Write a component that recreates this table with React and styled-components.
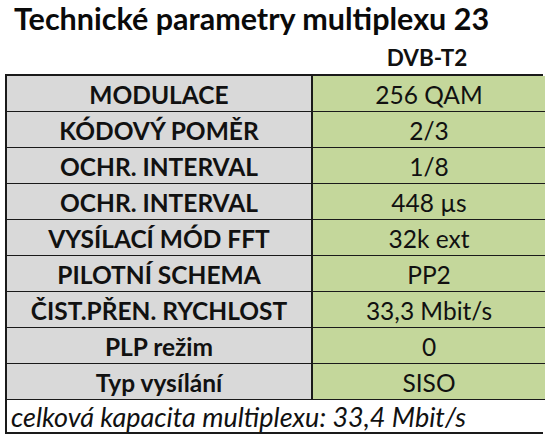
import React from 'react';
import styled, { createGlobalStyle } from 'styled-components';

const GlobalStyle = createGlobalStyle`
	html, body {
		margin: 0;
		padding: 0;
		background: #ffffff;
	}
	body {
		font-family: 'Lato', 'Open Sans', sans-serif;
		color: #111;
	}
`;

const rows = [
	['MODULACE', '256 QAM'],
	['KÓDOVÝ POMĚR', '2/3'],
	['OCHR. INTERVAL', '1/8'],
	['OCHR. INTERVAL', '448 µs'],
	['VYSÍLACÍ MÓD FFT', '32k ext'],
	['PILOTNÍ SCHEMA', 'PP2'],
	['ČIST.PŘEN. RYCHLOST', '33,3 Mbit/s'],
	['PLP režim', '0'],
	['Typ vysílání', 'SISO'],
];

const Page = styled.div`
	width: 550px;
	height: 437px;
	box-sizing: border-box;
	padding: 0 7px 0 5px;
`;

const Title = styled.h1`
	margin: 0;
	padding: 0 0 0 9px;
	height: 40px;
	line-height: normal;
	font-size: 30.5px;
	font-weight: 700;
	color: #0a0a0a;
`;

const ColumnHead = styled.div`
	display: grid;
	grid-template-columns: 306px 232px;
	height: 34px;
	align-items: center;

	& span {
		grid-column: 2;
		text-align: center;
		font-size: 22.5px;
		font-weight: 700;
	}
`;

const Table = styled.div`
	display: grid;
	grid-template-columns: 306px 232px;
	border: 2px solid #1a1a1a;
	box-sizing: border-box;
	width: 538px;
`;

const Cell = styled.div`
	height: 36px;
	box-sizing: border-box;
	display: flex;
	align-items: center;
	justify-content: center;
	padding-top: 1px;
	font-size: 24.5px;
	font-weight: ${(p) => (p.$label ? 700 : 400)};
	background: ${(p) => (p.$label ? '#d9d9d9' : '#c4d79b')};
	border-bottom: 1px solid #1a1a1a;
	border-right: ${(p) => (p.$label ? '2px solid #1a1a1a' : 'none')};
`;

const Footer = styled.div`
	grid-column: 1 / 3;
	height: 32px;
	display: flex;
	align-items: center;
	padding-left: 4px;
	font-size: 27px;
	font-style: italic;
	background: #fff;
`;

export default function App() {
	return (
		<Page>
			<GlobalStyle />
			<Title>Technické parametry multiplexu 23</Title>
			<ColumnHead>
				<span>DVB-T2</span>
			</ColumnHead>
			<Table>
				{rows.map(([label, value], i) => (
					<React.Fragment key={i}>
						<Cell $label>{label}</Cell>
						<Cell>{value}</Cell>
					</React.Fragment>
				))}
				<Footer>celková kapacita multiplexu: 33,4 Mbit/s</Footer>
			</Table>
		</Page>
	);
}
